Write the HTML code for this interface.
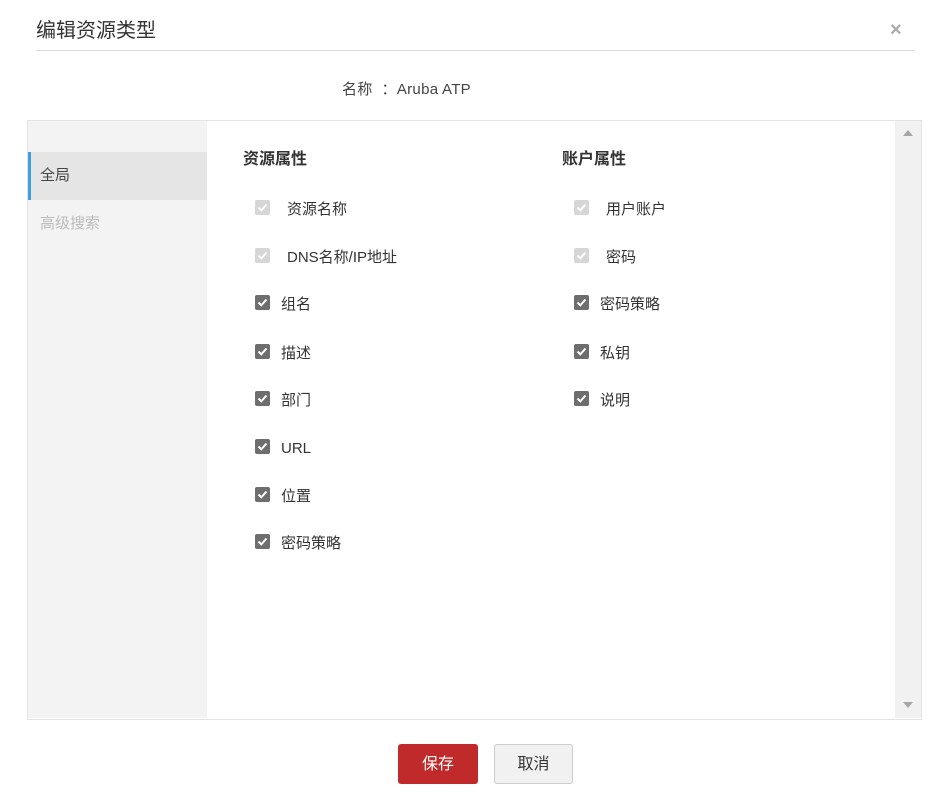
<!DOCTYPE html>
<html><head><meta charset="utf-8"><style>
*{margin:0;padding:0;box-sizing:border-box}
body{width:951px;height:805px;background:#fff;font-family:"Liberation Sans","Noto Sans CJK SC",sans-serif;color:#333;position:relative;overflow:hidden}
.abs{position:absolute}
.t{font-size:15px;line-height:20px;white-space:nowrap}
.cb{position:absolute;width:15px;height:15px;border-radius:2px;background:#6e6e6e}
.cb.d{background:#d6d6d6}
.cb svg{position:absolute;left:2px;top:2px}
</style></head><body>
<div class="abs" style="left:36px;top:18px;font-size:20px;line-height:26px;color:#333">编辑资源类型</div>
<div class="abs" style="left:890px;top:18px;font-size:20px;font-weight:bold;color:#aaa;line-height:24px">×</div>
<div class="abs" style="left:36px;top:50px;width:878px;height:1px;background:#ddd"></div>
<div class="abs t" style="left:342px;top:80px;color:#444;letter-spacing:0.3px">名称 &nbsp;：Aruba ATP</div>
<div class="abs" style="left:27px;top:120px;width:895px;height:600px;border:1px solid #e3e3e3"></div>
<div class="abs" style="left:28px;top:121px;width:179px;height:597px;background:#f3f3f3"></div>
<div class="abs" style="left:28px;top:152px;width:179px;height:48px;background:#e5e5e5;border-left:3px solid #3fa0dc"></div>
<div class="abs t" style="left:40px;top:166px;color:#444">全局</div>
<div class="abs t" style="left:40px;top:214px;color:#bbb">高级搜索</div>
<div class="abs" style="left:895px;top:121px;width:26px;height:597px;background:#f1f1f1"></div>
<div class="abs" style="left:903px;top:130px;width:0;height:0;border-left:5px solid transparent;border-right:5px solid transparent;border-bottom:6px solid #a6a6a6"></div>
<div class="abs" style="left:903px;top:702px;width:0;height:0;border-left:5px solid transparent;border-right:5px solid transparent;border-top:6px solid #a6a6a6"></div>
<div class="abs" style="left:243px;top:150px;font-size:16px;font-weight:bold;line-height:20px">资源属性</div>
<div class="abs" style="left:562px;top:150px;font-size:16px;font-weight:bold;line-height:20px">账户属性</div>

<div id="rows"></div>
<script>
var L=[["资源名称",1],["DNS名称/IP地址",1],["组名"],["描述"],["部门"],["URL"],["位置"],["密码策略"]];
var R=[["用户账户",1],["密码",1],["密码策略"],["私钥"],["说明"]];
var ys=[208,256,303,352,399,447,495,542],h="";
function add(a,x){a.forEach(function(r,i){var y=ys[i];
h+='<div class="cb'+(r[1]?' d':'')+'" style="left:'+x+'px;top:'+(y-8)+'px"><svg width="11" height="11" viewBox="0 0 11 11"><path d="M1.5 5.5L4.3 8.3L9.5 2.5" stroke="#fff" stroke-width="2" fill="none"/></svg></div>';
h+='<div class="abs t" style="left:'+(x+(r[1]?32:26))+'px;top:'+(y-8)+'px">'+r[0]+'</div>';});}
add(L,255);add(R,574);
document.getElementById('rows').innerHTML=h;
</script>
<div class="abs" style="left:398px;top:744px;width:80px;height:40px;background:#c12a2a;border-radius:3px;color:#fff;font-size:16px;line-height:42px;text-align:center">保存</div>
<div class="abs" style="left:494px;top:744px;width:79px;height:40px;background:#f1f1f1;border:1px solid #ccc;border-radius:3px;color:#333;font-size:16px;line-height:40px;text-align:center">取消</div>
</body></html>
